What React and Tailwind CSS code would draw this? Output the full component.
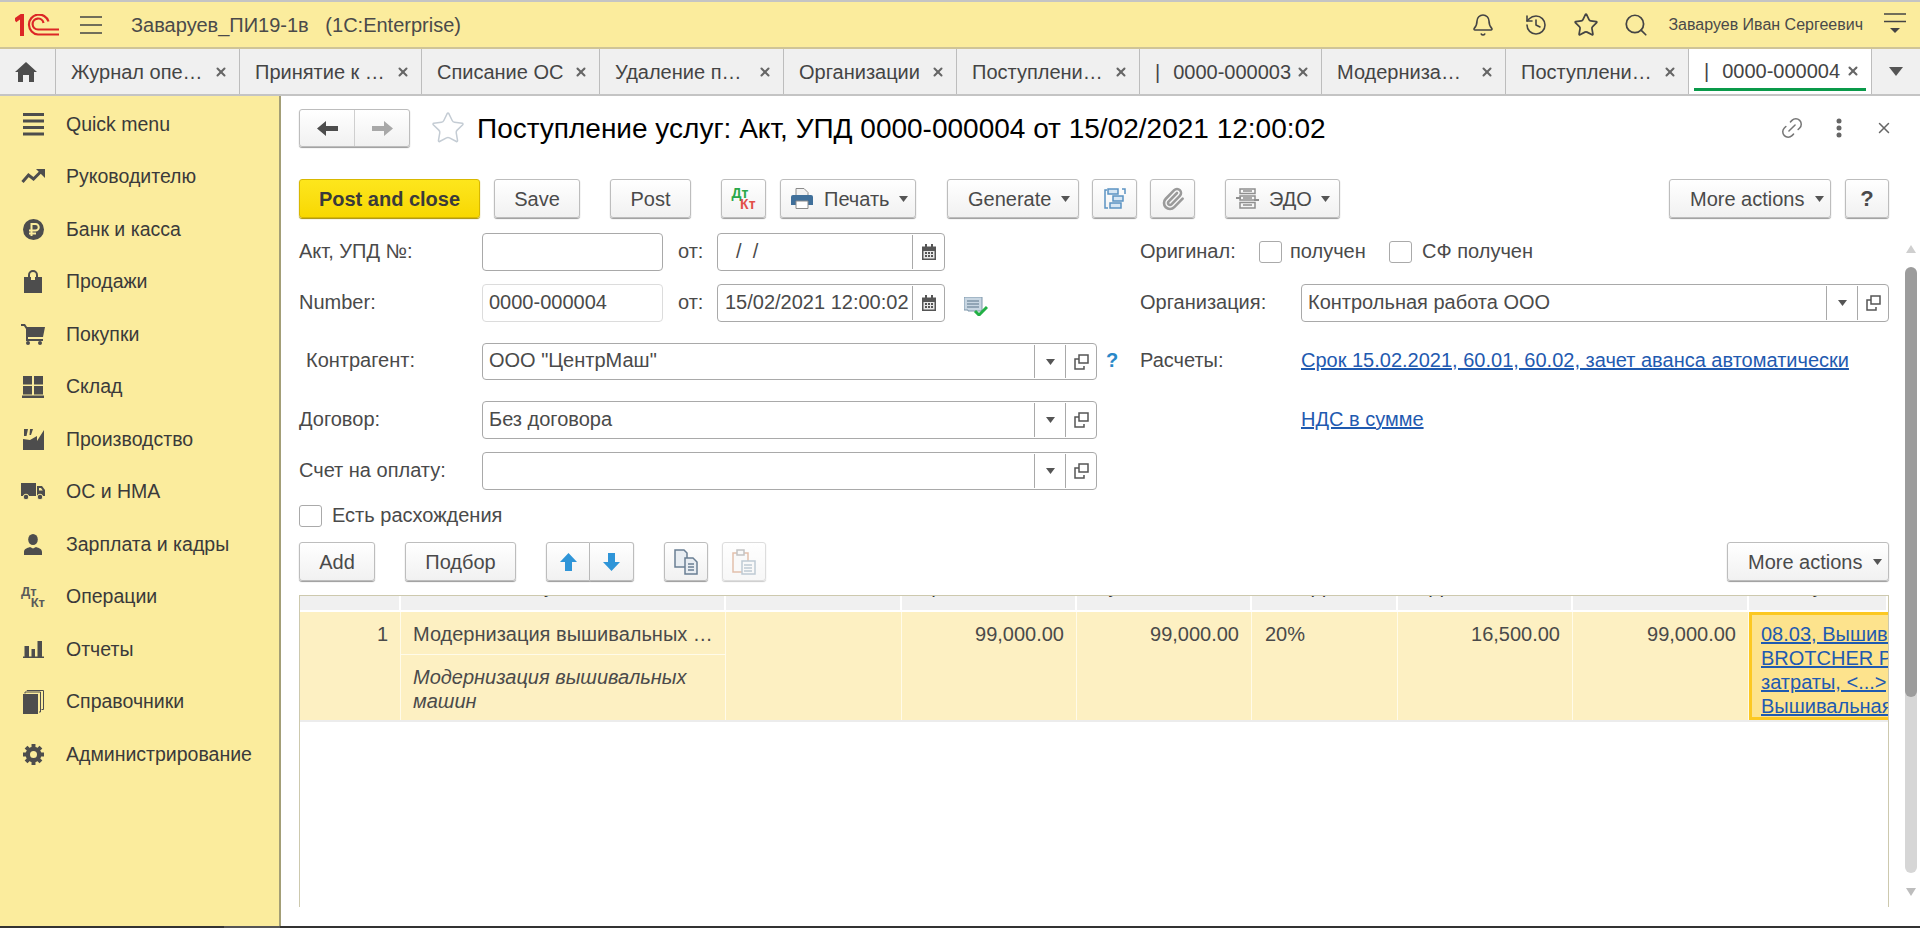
import React from "react";
import { Bell, History, Star, Search, Link2, X, Paperclip } from "lucide-react";

const Caret = ({ className = "" }) => (
  <svg width="9" height="6" viewBox="0 0 9 6" className={"shrink-0 " + className}><path d="M0 0h9L4.500 6z" fill="#555" /></svg>
);

const Btn = ({ className = "", children }) => (
  <div className={"h-[39px] shrink-0 flex items-center rounded-[3px] border border-[#bdbdbd] bg-linear-to-b from-white to-[#f1f1f1] shadow-[0_1px_1px_#9a9a9a] text-[20px] text-[#4a4a4a] " + className}>{children}</div>
);

const Open = () => (
  <svg width="15" height="16" viewBox="0 0 15 16" fill="none" stroke="#555" strokeWidth="1.500"><path d="M5 1h9v8H5z" /><path d="M5 5H1v10h9v-3" /></svg>
);

const Cal = () => (
  <svg width="14" height="16" viewBox="0 0 14 16"><path d="M0 2.500h14V16H0z" fill="#555" /><path d="M3 0h2v4H3zM9 0h2v4H9z" fill="#555" /><path d="M1.500 7h11v7.500h-11z" fill="#e8e8e8" /><path d="M3 8h2v2H3zM6 8h2v2H6zM9 8h2v2H9zM3 11h2v2H3zM6 11h2v2H6zM9 11h2v2H9z" fill="#555" /></svg>
);

const Check = () => <div className="w-[23px] h-[22px] shrink-0 rounded-[3px] border border-[#aaa] bg-white"></div>;

const Label = ({ className = "", children }) => <div className={"text-[20px] text-[#4a4a4a] shrink-0 pb-[2px] " + className}>{children}</div>;

const Combo = ({ className = "", text, pad = "pb-[2px]" }) => (
  <div className={"h-full shrink-0 flex items-stretch rounded-[4px] border border-[#a9a9a9] bg-white " + className}>
    <div className={"flex-1 pl-[6px] flex items-center text-[20px] text-[#4a4a4a] whitespace-nowrap overflow-hidden " + pad}>{text}</div>
    <div className="w-[31px] my-[1px] border-l border-[#a9a9a9] flex items-center justify-center"><Caret /></div>
    <div className="w-[31px] my-[1px] border-l border-[#a9a9a9] flex items-center justify-center"><Open /></div>
  </div>
);

const DateBox = ({ text, pad }) => (
  <div className="w-[228px] h-full shrink-0 flex items-stretch rounded-[4px] border border-[#a9a9a9] bg-white">
    <div className={"flex-1 flex items-center text-[20px] text-[#4a4a4a] whitespace-pre overflow-hidden pb-[2px] " + pad}>{text}</div>
    <div className="w-[32px] my-[1px] border-l border-[#a9a9a9] flex items-center justify-center"><Cal /></div>
  </div>
);

const Y = "#fbec9d";
const G = "#4d4d4d";

const I = {
  quick: <svg width="21" height="23" viewBox="0 0 21 23" fill={G}><path d="M0 0h21v3H0zM0 6.500h21v3H0zM0 13h21v3H0zM0 19.500h21v3H0z" /></svg>,
  trend: <svg width="24" height="15" viewBox="0 0 24 15" fill="none"><path d="M1.500 13l6-7 5 4 7-7" stroke={G} strokeWidth="3" /><path d="M15 0h9v9z" fill={G} /></svg>,
  rub: <svg width="21" height="21" viewBox="0 0 21 21"><circle cx="10.500" cy="10.500" r="10.500" fill={G} /><path d="M8.500 17V5h4a3.200 3.200 0 010 6.500H6M6 14.500h7" fill="none" stroke={Y} strokeWidth="2" /></svg>,
  bag: <svg width="18" height="23" viewBox="0 0 18 23" fill={G}><path d="M0 7h18v16H0z" /><path d="M5 11V5a4 4 0 018 0v6" fill="none" stroke={G} strokeWidth="2" /><path d="M7 7h4v3H7z" fill={Y} /></svg>,
  cart: <svg width="24" height="21" viewBox="0 0 24 21" fill={G}><path d="M0 0h4l2 3h18l-2 10H7v2h15v2H5V5L3 2H0z" /><circle cx="7" cy="19" r="2" /><circle cx="19" cy="19" r="2" /></svg>,
  store: <svg width="22" height="22" viewBox="0 0 22 22" fill={G}><path d="M1 0h9v8.500H1zM12 0h9v8.500h-9zM1 10h9v8.500H1zM12 10h9v8.500h-9zM0 19.500h22V22H0z" /></svg>,
  factory: <svg width="21" height="21" viewBox="0 0 21 21" fill={G}><path d="M1 0h4L3.500 7H1zM7 0h3L8 6H6.500zM0 10l7 1 7-4v5l7-11v20H0z" /></svg>,
  truck: <svg width="24" height="17" viewBox="0 0 24 17" fill={G}><path d="M0 0h15v13H0z" /><path d="M16 3h5l3 4v6h-8zM18 5v2.500h3.800L20 5z" fillRule="evenodd" /><circle cx="5" cy="14" r="2.800" stroke={Y} /><circle cx="19" cy="14" r="2.800" stroke={Y} /></svg>,
  user: <svg width="18" height="21" viewBox="0 0 18 21" fill={G}><ellipse cx="9" cy="5.500" rx="4.800" ry="5.500" /><path d="M0 21v-3c0-3 3-4 6-5l3 1.500 3-1.500c3 1 6 2 6 5v3z" /></svg>,
  chart: <svg width="21" height="17" viewBox="0 0 21 17" fill={G}><path d="M1.500 5H6v10.500H1.500zM8.500 8H12v7.500H8.500zM14.500 0H19v15.500h-4.500zM0 15.500h21V17H0z" /></svg>,
  books: <svg width="21" height="24" viewBox="0 0 21 24" fill={G}><path d="M0 4h15v20H0z" /><path d="M2 3.500V2h15.500v20H16" fill="none" stroke={G} /><path d="M4 1V.5h16.500v19H18.500" fill="none" stroke={G} /></svg>,
  gear: <svg width="21" height="21" viewBox="0 0 24 24" fill="none"><circle cx="12" cy="12" r="6.500" stroke={G} strokeWidth="5" /><g stroke={G} strokeWidth="4.500"><path d="M12 0v5M12 19v5M0 12h5M19 12h5M3.500 3.500L7 7M17 17l3.500 3.500M20.500 3.500L17 7M7 17l-3.500 3.500" /></g></svg>,
};

const DtKt = ({ a = "#5a5a5a", b = "#5a5a5a", size = "text-[13px]" }) => (
  <div className={"font-bold leading-[11px] w-[24px] " + size}>
    <div style={{ color: a }}>Дт</div>
    <div className="text-right" style={{ color: b }}>Кт</div>
  </div>
);

const menu = [
  ["Quick menu", I.quick], ["Руководителю", I.trend], ["Банк и касса", I.rub], ["Продажи", I.bag], ["Покупки", I.cart],
  ["Склад", I.store], ["Производство", I.factory], ["ОС и НМА", I.truck], ["Зарплата и кадры", I.user],
  ["Операции", <DtKt />], ["Отчеты", I.chart], ["Справочники", I.books], ["Администрирование", I.gear],
];

const tabs = [
  ["Журнал опе…", "w-[184px]"], ["Принятие к …", "w-[182px]"], ["Списание ОС", "w-[178px]"], ["Удаление п…", "w-[184px]"], ["Организации", "w-[173px]"],
  ["Поступлени…", "w-[183px]"], ["0000-000003", "w-[182px]", true], ["Модерниза…", "w-[184px]"], ["Поступлени…", "w-[183px]"],
];

const Tab = ({ text, className, bar }) => (
  <div className={"h-full shrink-0 border-r border-[#bdbdbd] flex items-center pl-[15px] text-[20px] text-[#444] whitespace-nowrap " + className}>
    <span className="flex-1 overflow-hidden flex">{bar && <span className="mr-[13px]">|</span>}{text}</span>
    <X size={14} strokeWidth={3.5} color="#666" className="mr-[11px] shrink-0" />
  </div>
);

const Head = ({ className, text, pad }) => (
  <div className={"h-full shrink-0 border-r-2 border-white bg-[#f0f0f0] overflow-hidden text-[20px] leading-[24px] text-[#333] whitespace-nowrap " + className}>
    <div className={"-mt-[22px] " + pad}>{text}</div>
  </div>
);

const Num = ({ className, text }) => (
  <div className={"h-full shrink-0 border-r border-[#fffbe9] text-right pr-[12px] pt-[10px] leading-[24px] " + className}>{text}</div>
);

export default function App() {
  return (
    <div className="w-[1920px] h-[928px] overflow-hidden flex flex-col bg-white font-['Liberation_Sans',Arial,sans-serif]">
      {/* top bar */}
      <div className="h-[49px] shrink-0 border-t-2 border-b-2 border-t-[#c4c4c4] border-b-[#cfc497] bg-[#fbec9d] flex items-center text-[#4a4a4a]">
        <svg width="44" height="22" viewBox="0 0 44 22" className="ml-[15px] shrink-0" fill="none" stroke="#dc2626" strokeWidth="2.200">
          <path d="M0 6.500L7 1.500V22" strokeWidth="4" />
          <path d="M33.500 7.500A10 10 0 1023 20.500h21" />
          <path d="M28.500 9A5.500 5.500 0 1023 15.500h21" />
        </svg>
        <svg width="22" height="18" viewBox="0 0 22 18" className="ml-[21px] shrink-0" stroke="#444" strokeWidth="1.500"><path d="M0 1h22M0 9h22M0 17h22" /></svg>
        <div className="ml-[29px] text-[20px] whitespace-pre">Заваруев_ПИ19-1в   (1С:Enterprise)</div>
        <div className="flex-1"></div>
        <Bell size={24} strokeWidth={1.6} color="#444" className="shrink-0" />
        <History size={24} strokeWidth={1.6} color="#444" className="ml-[29px] shrink-0" />
        <Star size={26} strokeWidth={1.6} color="#444" className="ml-[25px] shrink-0" />
        <Search size={26} strokeWidth={1.6} color="#444" className="ml-[24px] shrink-0" />
        <div className="ml-[19px] text-[16px] whitespace-nowrap">Заваруев Иван Сергеевич</div>
        <svg width="22" height="24" viewBox="0 0 22 24" className="ml-[21px] mr-[14px] shrink-0"><path d="M0 1h22M0 8.500h22" stroke="#444" strokeWidth="1.500" /><path d="M6 15h10l-5 5z" fill="#444" /></svg>
      </div>
      {/* tabs */}
      <div className="h-[47px] shrink-0 border-b-2 border-[#c4c4c4] bg-[#f0f0f0] flex items-center">
        <div className="w-[56px] h-full shrink-0 border-r border-[#bdbdbd] flex items-center justify-center pr-[3px]">
          <svg width="22" height="20" viewBox="0 0 22 20" fill="#4d4d4d"><path d="M11 0L22 10h-3v10h-5v-7H8v7H3V10H0z" /></svg>
        </div>
        {tabs.map(([t, w, b], i) => <Tab key={i} text={t} className={w} bar={b} />)}
        <div className="w-[183px] h-full shrink-0 bg-white border-r border-[#bdbdbd] flex flex-col pt-[5px]">
          <div className="flex-1 flex items-center pl-[15px] text-[20px] text-[#444] whitespace-nowrap">
            <span className="flex-1 flex"><span className="mr-[13px]">|</span>0000-000004</span>
            <X size={14} strokeWidth={3.5} color="#666" className="mr-[11px] shrink-0" />
          </div>
          <div className="h-[3px] mx-[5px] mb-[3px] bg-[#0a9a4a]"></div>
        </div>
        <div className="flex-1 flex justify-center"><svg width="14" height="9" viewBox="0 0 14 9"><path d="M0 0h14L7 9z" fill="#555" /></svg></div>
      </div>
      {/* body */}
      <div className="flex-1 min-h-0 flex">
        <div className="w-[281px] shrink-0 border-r-2 border-[#a39e76] bg-[#fbec9d] pt-[2px]">
          {menu.map(([t, ic], i) => (
            <div key={i} className="h-[52.500px] flex items-center text-[19.500px] text-[#3a3a3a]">
              <div className="w-[66px] flex justify-center shrink-0">{ic}</div>
              <div className="whitespace-nowrap">{t}</div>
            </div>
          ))}
        </div>
        <div className="flex-1 min-w-0 flex">
          <div className="w-[1590px] ml-[18px] shrink-0 flex flex-col">
            {/* title */}
            <div className="mt-[13px] h-[38px] flex items-center shrink-0">
              <div className="w-[111px] h-[38px] shrink-0 flex rounded-[3px] border border-[#bdbdbd] bg-linear-to-b from-white to-[#f1f1f1] shadow-[0_1px_1px_#9a9a9a]">
                <div className="flex-1 border-r border-[#cfcfcf] flex items-center justify-center">
                  <svg width="21" height="15" viewBox="0 0 21 15"><path d="M0 7.500L9 0v5h12v5H9v5z" fill="#4d4d4d" /></svg>
                </div>
                <div className="flex-1 flex items-center justify-center">
                  <svg width="21" height="15" viewBox="0 0 21 15"><path d="M21 7.500L12 0v5H0v5h12v5z" fill="#a8a8a8" /></svg>
                </div>
              </div>
              <Star size={36} strokeWidth={1} color="#c4ccd4" className="ml-[20px] shrink-0" />
              <div className="ml-[11px] pt-[2px] text-[28px] text-black whitespace-nowrap">Поступление услуг: Акт, УПД 0000-000004 от 15/02/2021 12:00:02</div>
              <div className="flex-1"></div>
              <Link2 size={26} strokeWidth={1.4} color="#777" className="-rotate-45 shrink-0" />
              <svg width="6" height="20" viewBox="0 0 6 20" className="ml-[31px] shrink-0" fill="#666"><circle cx="3" cy="3" r="2.500" /><circle cx="3" cy="10" r="2.500" /><circle cx="3" cy="17" r="2.500" /></svg>
              <X size={18} strokeWidth={2} color="#666" className="ml-[33px] mr-[-4px] shrink-0" />
            </div>
            {/* toolbar */}
            <div className="mt-[32px] flex shrink-0">
              <div className="w-[181px] h-[39px] shrink-0 flex items-center justify-center rounded-[3px] border border-[#d8b800] bg-linear-to-b from-[#fde61c] to-[#f8d800] shadow-[0_1px_1px_#a89000] text-[20px] font-bold text-[#3a3a3a]">Post and close</div>
              <Btn className="ml-[14px] w-[86px] justify-center">Save</Btn>
              <Btn className="ml-[30px] w-[81px] justify-center">Post</Btn>
              <Btn className="ml-[30px] w-[45px] justify-center"><DtKt a="#2aa84a" b="#e2504a" size="text-[14px]" /></Btn>
              <Btn className="ml-[14px] w-[136px] pl-[10px]">
                <svg width="22" height="21" viewBox="0 0 22 21" className="shrink-0"><path d="M5 .5h8l4 4V9H5z" fill="#f2f2f2" stroke="#8a8a8a" /><path d="M2 7h18a2 2 0 012 2v8H0V9a2 2 0 012-2z" fill="#3f6f9a" /><path d="M5 13h12v7.500H5z" fill="#fff" stroke="#8a8a8a" /></svg>
                <span className="ml-[11px]">Печать</span><Caret className="ml-[9px]" />
              </Btn>
              <Btn className="ml-[31px] w-[132px] pl-[20px]"><span>Generate</span><Caret className="ml-[10px]" /></Btn>
              <Btn className="ml-[13px] w-[45px] justify-center">
                <svg width="22" height="21" viewBox="0 0 22 21" fill="none" stroke="#5b93c2" strokeWidth="1.500"><path d="M4 1h10v5H4zM9 8h10v5H9zM6 15h11v5H6z" fill="#d6e6f4" /><path d="M3 2H1v18h3M18 1h3v5" /></svg>
              </Btn>
              <Btn className="ml-[13px] w-[45px] justify-center">
                <Paperclip size={24} strokeWidth={2.6} color="#9a9a9a" />
              </Btn>
              <Btn className="ml-[30px] w-[115px] pl-[10px]">
                <svg width="23" height="21" viewBox="0 0 23 21" fill="none" stroke="#8f8f8f" strokeWidth="1.500" className="shrink-0"><path d="M4 1h15v4.500H4zM4 8h15v4H4zM4 14.500h15V20H4zM7 3h9M7 10h9M7 17h9" /><path d="M0 10h5M18 12h5" strokeWidth="2" /></svg>
                <span className="ml-[10px]">ЭДО</span><Caret className="ml-[9px]" />
              </Btn>
              <div className="flex-1"></div>
              <Btn className="w-[162px] pl-[20px]"><span>More actions</span><Caret className="ml-[10px]" /></Btn>
              <Btn className="ml-[14px] w-[44px] justify-center font-bold text-[22px]">?</Btn>
            </div>
            {/* row 1 */}
            <div className="mt-[15px] h-[38px] shrink-0 flex items-center">
              <Label className="w-[183px]">Акт, УПД №:</Label>
              <div className="w-[181px] h-full shrink-0 rounded-[4px] border border-[#a9a9a9]"></div>
              <Label className="ml-[15px] w-[39px]">от:</Label>
              <DateBox text="/  /" pad="pl-[18px]" />
              <Label className="ml-[195px] w-[119px]">Оригинал:</Label>
              <Check />
              <Label className="ml-[8px] w-[99px]">получен</Label>
              <Check />
              <Label className="ml-[10px]">СФ получен</Label>
            </div>
            {/* row 2 */}
            <div className="mt-[13px] h-[38px] shrink-0 flex items-center">
              <Label className="w-[183px]">Number:</Label>
              <div className="w-[181px] h-full shrink-0 rounded-[4px] border border-[#dcdcdc] pl-[6px] pb-[2px] flex items-center text-[20px] text-[#4a4a4a]">0000-000004</div>
              <Label className="ml-[15px] w-[39px]">от:</Label>
              <DateBox text="15/02/2021 12:00:02" pad="pl-[7px]" />
              <svg width="24" height="19" viewBox="0 0 24 19" className="ml-[19px] mt-[6px] shrink-0">
                <path d="M0 0h18v14H4v-1H0z" fill="#c8d6e2" stroke="#7f97ab" /><path d="M3 4h12M3 7h12M3 10h12" stroke="#5b7489" />
                <path d="M11 14l4 4 8-8" fill="none" stroke="#22b045" strokeWidth="3" />
              </svg>
              <Label className="ml-[152px] w-[161px]">Организация:</Label>
              <Combo className="w-[588px]" text="Контрольная работа ООО" />
            </div>
            {/* row 3 */}
            <div className="mt-[21px] h-[37px] shrink-0 flex items-center">
              <Label className="w-[183px] pl-[7px] !pb-[3px]">Контрагент:</Label>
              <Combo className="w-[615px]" text={'ООО "ЦентрМаш"'} pad="pb-[3px]" />
              <div className="ml-[9px] w-[34px] shrink-0 text-[20px] font-bold text-[#2a88c8] pb-[3px]">?</div>
              <Label className="w-[161px] !pb-[3px]">Расчеты:</Label>
              <div className="text-[20px] text-[#1f5ab0] underline whitespace-nowrap pb-[3px]">Срок 15.02.2021, 60.01, 60.02, зачет аванса автоматически</div>
            </div>
            {/* row 4 */}
            <div className="mt-[21px] h-[38px] shrink-0 flex items-center">
              <Label className="w-[183px]">Договор:</Label>
              <Combo className="w-[615px]" text="Без договора" />
              <div className="ml-[204px] text-[20px] text-[#1f5ab0] underline whitespace-nowrap pb-[2px]">НДС в сумме</div>
            </div>
            {/* row 5 */}
            <div className="mt-[13px] h-[38px] shrink-0 flex items-center">
              <Label className="w-[183px]">Счет на оплату:</Label>
              <Combo className="w-[615px]" text="" />
            </div>
            {/* row 6 */}
            <div className="mt-[15px] h-[22px] shrink-0 flex items-center">
              <Check />
              <Label className="ml-[10px]">Есть расхождения</Label>
            </div>
            {/* table toolbar */}
            <div className="mt-[15px] flex shrink-0">
              <Btn className="w-[76px] justify-center">Add</Btn>
              <Btn className="ml-[30px] w-[111px] justify-center">Подбор</Btn>
              <Btn className="ml-[30px] w-[44px] justify-center rounded-r-none">
                <svg width="17" height="18" viewBox="0 0 17 18"><path d="M8.500 0L17 9h-5v9H5V9H0z" fill="#2f95d8" /></svg>
              </Btn>
              <Btn className="w-[44px] justify-center rounded-l-none border-l-0">
                <svg width="17" height="18" viewBox="0 0 17 18"><path d="M8.500 18L17 9h-5V0H5v9H0z" fill="#2f95d8" /></svg>
              </Btn>
              <Btn className="ml-[30px] w-[44px] justify-center">
                <svg width="24" height="26" viewBox="0 0 24 26" fill="#e8edf2" stroke="#6a7f94" strokeWidth="1.500"><path d="M1 1h9l3 3v14H1z" /><path d="M11 9h8l4 4v12H11z" /><path d="M14 15h6M14 18h6M14 21h6" /></svg>
              </Btn>
              <Btn className="ml-[14px] w-[44px] justify-center opacity-50">
                <svg width="24" height="26" viewBox="0 0 24 26" fill="#f4f4f4" strokeWidth="1.500"><path d="M1 4h15v19H1z" stroke="#c8825a" /><path d="M5 1h7v5H5z" stroke="#888" /><path d="M10 12h13v13H10z" stroke="#7f97ab" /><path d="M12 16h8M12 19h8M12 22h8" stroke="#7f97ab" /></svg>
              </Btn>
              <div className="flex-1"></div>
              <Btn className="w-[162px] pl-[20px]"><span>More actions</span><Caret className="ml-[10px]" /></Btn>
            </div>
            {/* table */}
            <div className="mt-[14px] h-[312px] shrink-0 border-x border-t border-[#cdc9ae] overflow-hidden">
              <div className="h-[14px] flex">
                <Head className="w-[101px]" text="" pad="" />
                <Head className="w-[325px]" text="Услуга" pad="pl-[110px]" />
                <Head className="w-[176px]" text="" pad="" />
                <Head className="w-[175px]" text="Цена" pad="pl-[18px]" />
                <Head className="w-[175px]" text="Сумма" pad="pl-[17px]" />
                <Head className="w-[146px]" text="% НДС" pad="pl-[22px]" />
                <Head className="w-[175px]" text="НДС" pad="pl-[17px]" />
                <Head className="w-[176px]" text="Всего" pad="pl-[20px]" />
                <Head className="w-[139px] border-r-0" text="Счет учета" pad="pl-[14px]" />
              </div>
              <div className="h-[110px] mt-[2px] flex border-b-2 border-[#ececec] text-[20px] text-[#4a4a4a] bg-[#fdf0c2] whitespace-nowrap">
                <Num className="w-[101px]" text="1" />
                <div className="w-[325px] h-full shrink-0 flex flex-col border-r border-[#fffbe9]">
                  <div className="h-[43px] pt-[10px] leading-[24px] pl-[12px] border-b border-[#fffbe9] shrink-0">Модернизация вышивальных …</div>
                  <div className="pt-[10px] pl-[12px] leading-[24px] italic">Модернизация вышивальных<br />машин</div>
                </div>
                <Num className="w-[176px]" text="" />
                <Num className="w-[175px]" text="99,000.00" />
                <Num className="w-[175px]" text="99,000.00" />
                <div className="w-[146px] h-full shrink-0 border-r border-[#fffbe9] pl-[13px] pt-[10px] leading-[24px]">20%</div>
                <Num className="w-[175px]" text="16,500.00" />
                <Num className="w-[176px]" text="99,000.00" />
                <div className="w-[139px] h-full shrink-0 border-[3px] border-r-0 border-[#fcc822] bg-[#fde38d] pl-[9px] pt-[7px] leading-[24px] overflow-hidden text-[#1f5ab0] underline">
                  <div>08.03, Вышивальная</div>
                  <div>BROTCHER PR-650E</div>
                  <div>затраты, &lt;...&gt;, Услуги</div>
                  <div>Вышивальная машина</div>
                </div>
              </div>
            </div>
          </div>
          {/* scrollbar */}
          <div className="ml-[16px] w-[12px] shrink-0 flex flex-col items-center pt-[149px]">
            <svg width="10" height="8" viewBox="0 0 10 8"><path d="M5 0l5 8H0z" fill="#cfcfcf" /></svg>
            <div className="mt-[14px] w-full h-[430px] rounded-[6px] bg-[#9c9c9c] shrink-0 relative z-10"></div>
            <div className="-mt-[6px] w-full h-[182px] rounded-b-[6px] bg-[#d6d6d6] shrink-0"></div>
            <svg width="10" height="8" viewBox="0 0 10 8" className="mt-[15px]"><path d="M5 8l5-8H0z" fill="#bdbdbd" /></svg>
          </div>
        </div>
      </div>
      <div className="h-[2px] shrink-0 bg-[#333] flex"><div className="ml-[224px] w-[56px] bg-[#555]"></div></div>
    </div>
  );
}
